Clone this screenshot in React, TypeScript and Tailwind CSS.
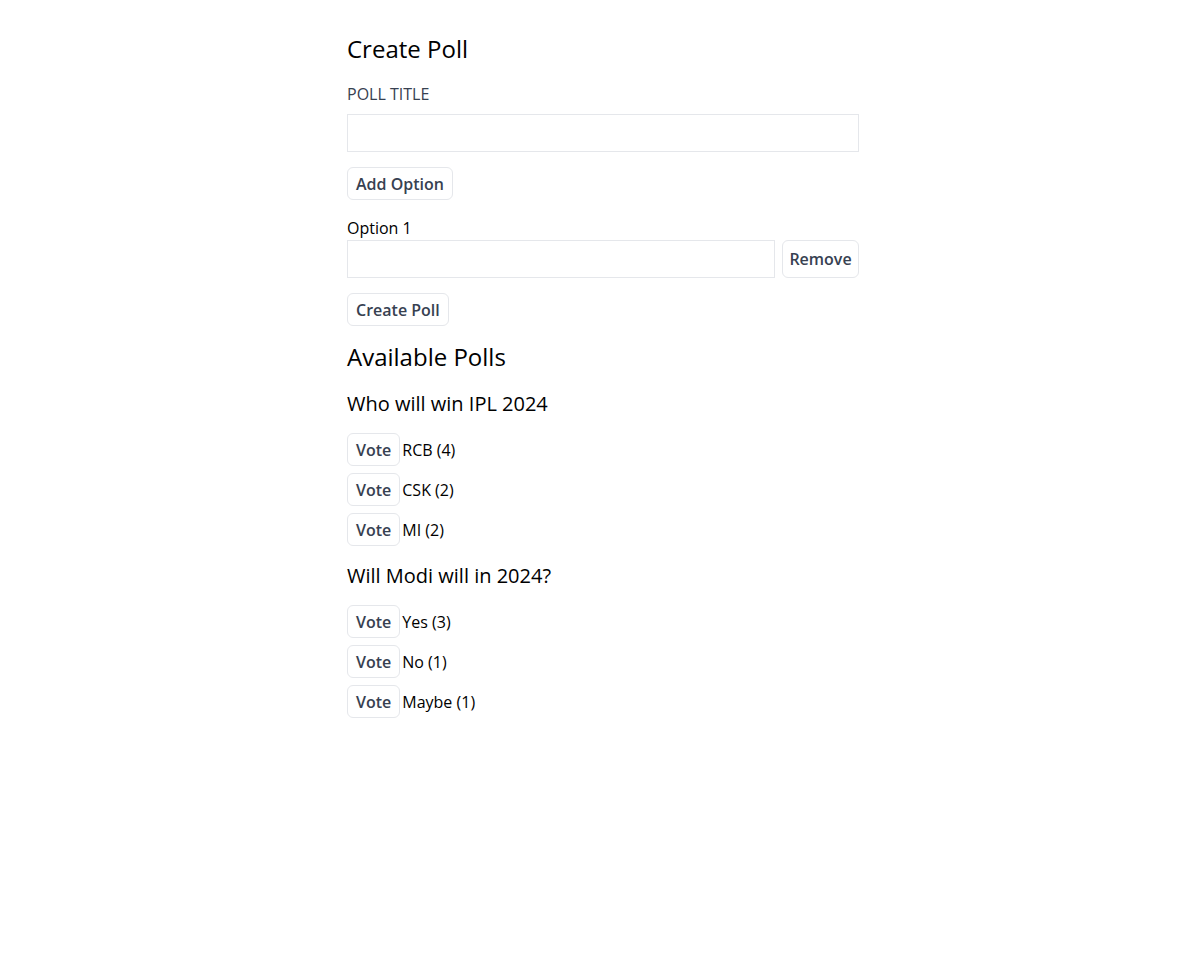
import { useState } from "react";

type Poll = {
  title: string;
  options: { text: string; votes: number }[];
};

const initialPolls: Poll[] = [
  {
    title: "Who will win IPL 2024",
    options: [
      { text: "RCB", votes: 4 },
      { text: "CSK", votes: 2 },
      { text: "MI", votes: 2 },
    ],
  },
  {
    title: "Will Modi will in 2024?",
    options: [
      { text: "Yes", votes: 3 },
      { text: "No", votes: 1 },
      { text: "Maybe", votes: 1 },
    ],
  },
];

const btn =
  "rounded-md border border-[#e5e7eb] bg-white px-2 text-base leading-6 font-semibold text-[#374151]";

export default function App() {
  const [title, setTitle] = useState("");
  const [options, setOptions] = useState<string[]>([""]);
  const [polls, setPolls] = useState<Poll[]>(initialPolls);

  const vote = (pi: number, oi: number) => {
    setPolls((ps) =>
      ps.map((p, i) =>
        i !== pi
          ? p
          : {
              ...p,
              options: p.options.map((o, j) =>
                j === oi ? { ...o, votes: o.votes + 1 } : o
              ),
            }
      )
    );
  };

  return (
    <div className="min-h-screen bg-white font-['Open_Sans',sans-serif] text-black">
      <div className="ml-[347px] w-[512px] pt-[33px]">
        <h2 className="text-2xl leading-8">Create Poll</h2>
        <label className="mt-[17px] block leading-6 text-[#374151]">POLL TITLE</label>
        <input
          value={title}
          onChange={(e) => setTitle(e.target.value)}
          className="mt-[8px] block h-[38px] w-full border border-[#e5e7eb] px-2 outline-none"
        />
        <button
          className={`${btn} mt-[15px] block h-[33px]`}
          onClick={() => setOptions((o) => [...o, ""])}
        >
          Add Option
        </button>

        <div className="mt-[16px]">
          {options.map((o, i) => (
            <div key={i}>
              <label className="block leading-6">Option {i + 1}</label>
              <div className="flex gap-[7px]">
                <input
                  value={o}
                  onChange={(e) =>
                    setOptions((os) => os.map((x, j) => (j === i ? e.target.value : x)))
                  }
                  className="h-[38px] w-[428px] shrink-0 border border-[#e5e7eb] px-2 outline-none"
                />
                <button
                  className={`${btn} h-[38px] flex-1 !px-0`}
                  onClick={() => setOptions((os) => os.filter((_, j) => j !== i))}
                >
                  Remove
                </button>
              </div>
            </div>
          ))}
        </div>

        <button className={`${btn} mt-[15px] block h-[33px]`}>Create Poll</button>

        <h2 className="mt-[15px] text-2xl leading-8">Available Polls</h2>

        {polls.map((p, pi) => (
          <div key={p.title}>
            <h3 className={`${pi === 0 ? "mt-[17px]" : "mt-[16px]"} text-xl leading-7`}>
              {p.title}
            </h3>
            <div className="mt-[15px] flex flex-col gap-[7px]">
              {p.options.map((o, oi) => (
                <div key={o.text} className="flex items-center gap-[2px]">
                  <button className={`${btn} h-[33px]`} onClick={() => vote(pi, oi)}>
                    Vote
                  </button>
                  <span className="leading-6">
                    {o.text} ({o.votes})
                  </span>
                </div>
              ))}
            </div>
          </div>
        ))}
      </div>
    </div>
  );
}
